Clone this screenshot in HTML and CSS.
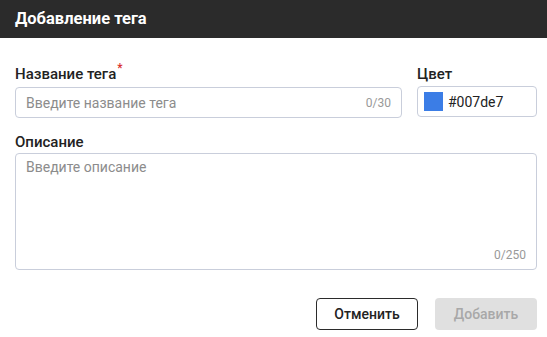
FILE: index.html
```
<!DOCTYPE html>
<html lang="ru">
<head>
<meta charset="utf-8">
<link rel="stylesheet" href="styles.css">
</head>
<body>
<div class="dialog">
  <div class="header">Добавление тега</div>
  <div class="body">
    <div class="row">
      <div class="field name">
        <div class="label">Название тега<span class="req">*</span></div>
        <div class="input">
          <span class="placeholder">Введите название тега</span>
          <span class="count">0/30</span>
        </div>
      </div>
      <div class="field color">
        <div class="label">Цвет</div>
        <div class="input color-input">
          <span class="swatch"></span>
          <span class="value">#007de7</span>
        </div>
      </div>
    </div>
    <div class="field desc">
      <div class="label">Описание</div>
      <div class="textarea">
        <span class="placeholder">Введите описание</span>
        <span class="count">0/250</span>
      </div>
    </div>
    <div class="actions">
      <button class="btn cancel">Отменить</button>
      <button class="btn add">Добавить</button>
    </div>
  </div>
</div>
</body>
</html>
```
FILE: styles.css
```
html, body {
  margin: 0;
  padding: 0;
  background: #fff;
  font-family: Roboto, "Liberation Sans", sans-serif;
}
.dialog {
  width: 547px;
}
.header {
  height: 38px;
  background: #2b2b2b;
  color: #fff;
  font-size: 16.5px;
  font-weight: 700;
  line-height: 38px;
  padding-left: 15px;
}
.body {
  padding: 27px 10px 0 15px;
  display: flex;
  flex-direction: column;
}
.row {
  display: flex;
  gap: 15px;
}
.field {
  display: flex;
  flex-direction: column;
}
.name { width: 387px; }
.color { width: 120px; }
.label {
  font-size: 15px;
  font-weight: 500;
  line-height: 18px;
  color: #222;
  margin-bottom: 3px;
}
.req {
  color: #d9302c;
  font-size: 12px;
  position: relative;
  top: -7px;
  margin-left: 1px;
}
.input {
  height: 31px;
  box-sizing: border-box;
  border: 1px solid #c9cedb;
  border-radius: 4px;
  display: flex;
  align-items: center;
  padding: 0 10px;
  font-size: 14px;
}
.placeholder {
  color: #8c8c8c;
  font-size: 14px;
  flex: 1;
}
.count {
  color: #999;
  font-size: 12px;
}
.color-input {
  padding: 0 6px;
  gap: 5px;
}
.swatch {
  width: 19px;
  height: 19px;
  background: #3b7de6;
}
.value {
  color: #222;
  font-size: 14px;
}
.desc {
  margin-top: 15px;
}
.desc .label { margin-bottom: 2px; }
.textarea {
  height: 117px;
  box-sizing: border-box;
  border: 1px solid #c9cedb;
  border-radius: 4px;
  padding: 4px 10px 6px 10px;
  display: flex;
  flex-direction: column;
  justify-content: space-between;
}
.textarea .placeholder { flex: none; line-height: 18px; }
.textarea .count { align-self: flex-end; line-height: 16px; }
.actions {
  margin-top: 28px;
  display: flex;
  justify-content: flex-end;
  gap: 17px;
}
.btn {
  width: 102px;
  height: 32px;
  border-radius: 4px;
  font-family: Roboto, "Liberation Sans", sans-serif;
  font-size: 14px;
  font-weight: 500;
  padding: 0;
}
.cancel {
  background: #fff;
  border: 1px solid #2b2b2b;
  color: #222;
}
.add {
  background: #e0e0e0;
  border: none;
  color: #a8a8a8;
}
```
